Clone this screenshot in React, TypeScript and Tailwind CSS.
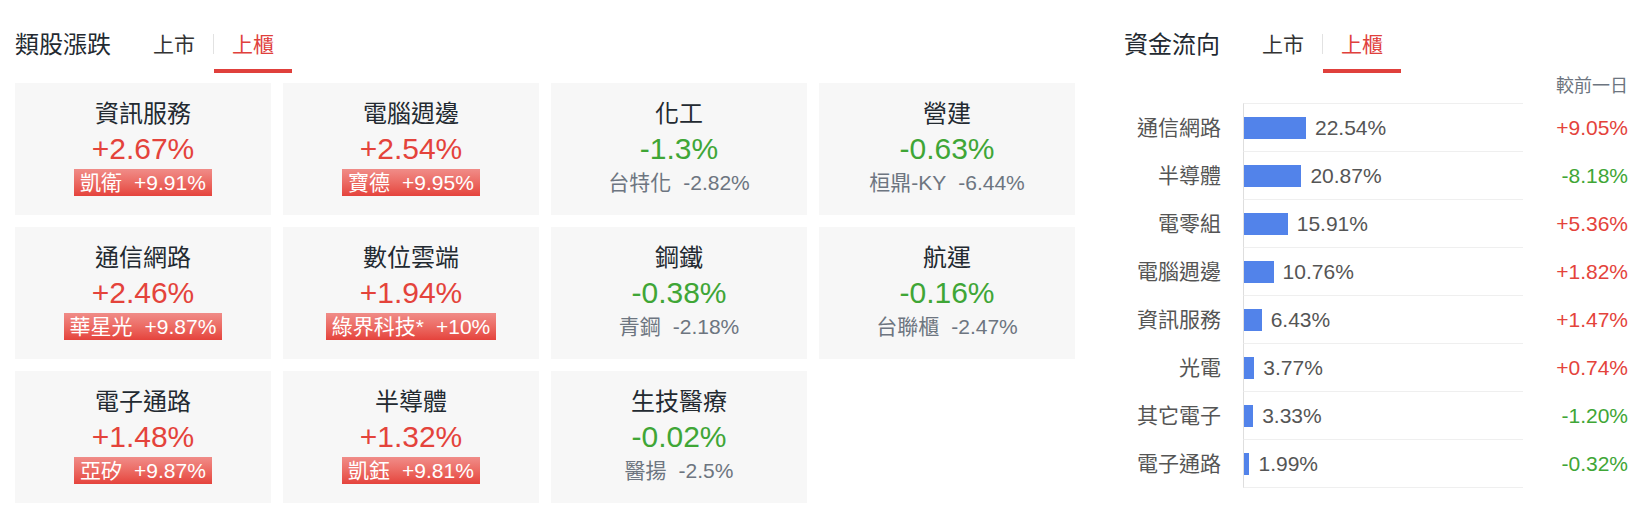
import React from "react";

type Sector = {
    name: string;
    pct: string;
    top: string;
    topPct: string;
    hot?: boolean;
};

type Flow = {
    name: string;
    share: number;
    chg: string;
};

const sectors: Sector[] = [
    { name: "資訊服務", pct: "+2.67%", top: "凱衛", topPct: "+9.91%", hot: true },
    { name: "電腦週邊", pct: "+2.54%", top: "寶德", topPct: "+9.95%", hot: true },
    { name: "化工", pct: "-1.3%", top: "台特化", topPct: "-2.82%" },
    { name: "營建", pct: "-0.63%", top: "桓鼎-KY", topPct: "-6.44%" },
    { name: "通信網路", pct: "+2.46%", top: "華星光", topPct: "+9.87%", hot: true },
    { name: "數位雲端", pct: "+1.94%", top: "綠界科技*", topPct: "+10%", hot: true },
    { name: "鋼鐵", pct: "-0.38%", top: "青鋼", topPct: "-2.18%" },
    { name: "航運", pct: "-0.16%", top: "台聯櫃", topPct: "-2.47%" },
    { name: "電子通路", pct: "+1.48%", top: "亞矽", topPct: "+9.87%", hot: true },
    { name: "半導體", pct: "+1.32%", top: "凱鈺", topPct: "+9.81%", hot: true },
    { name: "生技醫療", pct: "-0.02%", top: "醫揚", topPct: "-2.5%" },
];

const flows: Flow[] = [
    { name: "通信網路", share: 22.54, chg: "+9.05%" },
    { name: "半導體", share: 20.87, chg: "-8.18%" },
    { name: "電零組", share: 15.91, chg: "+5.36%" },
    { name: "電腦週邊", share: 10.76, chg: "+1.82%" },
    { name: "資訊服務", share: 6.43, chg: "+1.47%" },
    { name: "光電", share: 3.77, chg: "+0.74%" },
    { name: "其它電子", share: 3.33, chg: "-1.20%" },
    { name: "電子通路", share: 1.99, chg: "-0.32%" },
];

const tone = (v: string) => (v.startsWith("-") ? "text-[#3fa636]" : "text-[#e4433b]");

function Tabs({ title }: { title: string }) {
    return (
        <div className="flex h-[53px] items-center">
            <h2 className="w-[96px] pb-[4px] text-[24px] leading-[32px] text-[#232a31]">{title}</h2>
            <div className="ml-[24px] flex h-full items-center px-[18px] pb-[4px] text-[21px] text-[#333]">上市</div>
            <span className="mt-[14px] h-[20px] w-px self-start bg-[#e2e2e2]" />
            <div className="flex h-full items-center border-b-4 border-[#e0403c] px-[18px] text-[21px] text-[#e0403c]">
                上櫃
            </div>
        </div>
    );
}

function SectorCard({ s }: { s: Sector }) {
    return (
        <div className="flex h-[132px] flex-col items-center bg-[#f7f7f7] pt-[17px]">
            <div className="text-[24px] leading-[28px] text-[#232a31]">{s.name}</div>
            <div className={`mt-[6px] text-[30px] leading-[30px] ${tone(s.pct)}`}>{s.pct}</div>
            {s.hot ? (
                <div className="mt-[5px] flex h-[27px] items-center bg-linear-to-b from-[#f08c88] to-[#e5423c] px-[6px] text-[21px] leading-[27px] text-white">
                    <span>{s.top}</span>
                    <span className="ml-[12px]">{s.topPct}</span>
                </div>
            ) : (
                <div className="mt-[5px] flex h-[27px] items-center px-[6px] text-[21px] leading-[27px] text-[#6d7580]">
                    <span>{s.top}</span>
                    <span className="ml-[12px]">{s.topPct}</span>
                </div>
            )}
        </div>
    );
}

export default function App() {
    return (
        <div className="flex h-[514px] w-[1650px] bg-white pl-[15px] pt-[20px] font-['Liberation_Sans','Noto_Sans_CJK_TC',sans-serif]">
            {/* sector movers */}
            <section className="w-[1060px]">
                <Tabs title="類股漲跌" />
                <div className="mt-[10px] grid grid-cols-4 gap-[12px]">
                    {sectors.map((s) => (
                        <SectorCard key={s.name} s={s} />
                    ))}
                </div>
            </section>

            {/* money flow */}
            <section className="ml-[49px] w-[504px]">
                <Tabs title="資金流向" />
                <div className="h-[30px] pt-[1px] text-right text-[18px] leading-[24px] text-[#6d7580]">較前一日</div>
                <div>
                    {flows.map((f, i) => (
                        <div key={f.name} className="flex items-center">
                            <div className="w-[97px] text-right text-[21px] text-[#555]">{f.name}</div>
                            <div
                                className={`ml-[22px] flex w-[280px] items-center border-b border-l border-b-[#efefef] border-l-[#dedede] ${
                                    i === 0 ? "h-[49px] border-t border-t-[#efefef]" : "h-[48px]"
                                }`}
                            >
                                <div className="h-[22px] bg-[#5283ea]" style={{ width: `${f.share * 2.75}px` }} />
                                <span className="ml-[9px] text-[21px] text-[#555]">{f.share.toFixed(2)}%</span>
                            </div>
                            <div className={`flex-1 text-right text-[21px] ${tone(f.chg)}`}>{f.chg}</div>
                        </div>
                    ))}
                </div>
            </section>
        </div>
    );
}
